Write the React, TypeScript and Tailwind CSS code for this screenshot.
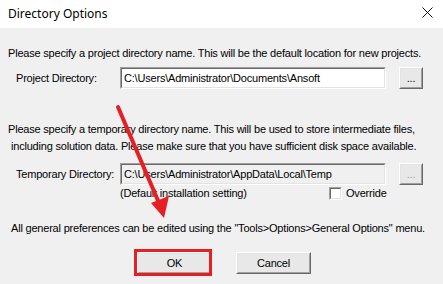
function Sunken({ children, className = "", disabled = false }: { children?: React.ReactNode; className?: string; disabled?: boolean }) {
  return (
    <div
      className={`border border-t-[#a0a0a0] border-l-[#a0a0a0] border-b-white border-r-white ${className}`}
    >
      <div
        className={`h-full border border-t-[#696969] border-l-[#696969] border-b-[#e3e3e3] border-r-[#e3e3e3] flex items-center px-[2px] ${
          disabled ? "bg-[#f0f0f0]" : "bg-white"
        }`}
      >
        {children}
      </div>
    </div>
  );
}

function WinButton({ children, className = "", disabled = false }: { children?: React.ReactNode; className?: string; disabled?: boolean }) {
  return (
    <div
      className={`border border-t-white border-l-white border-b-[#696969] border-r-[#696969] ${className}`}
    >
      <div
        className={`h-full border border-t-[#e3e3e3] border-l-[#e3e3e3] border-b-[#a0a0a0] border-r-[#a0a0a0] bg-[#e8e8e8] flex items-center justify-center ${
          disabled ? "text-[#a0a0a0]" : "text-black"
        }`}
      >
        {children}
      </div>
    </div>
  );
}

export default function App() {
  return (
    <div className="relative w-[443px] h-[284px] overflow-hidden bg-[#f0f0f0] font-['Liberation_Sans',Arial,sans-serif] text-[11px] tracking-[-0.2px] leading-[14px] text-black">
      {/* title bar */}
      <div className="h-[28px] bg-white flex items-center justify-between pl-[8px] pr-[10px]">
        <span className="font-['Noto_Sans',sans-serif] text-[12px] tracking-normal">Directory Options</span>
        <svg width="11" height="11" viewBox="0 0 11 11" className="mt-[-3px]">
          <path d="M0.5 0.5L10.5 10.5M10.5 0.5L0.5 10.5" stroke="#111" strokeWidth="1" />
        </svg>
      </div>

      <div className="pl-[8px] pt-[18px]">
        <p>Please specify a project directory name. This will be the default location for new projects.</p>

        <div className="flex items-center mt-[7px] h-[22px]">
          <span className="pl-[8px] w-[112px]">Project Directory:</span>
          <Sunken className="w-[266px] h-[22px]">C:\Users\Administrator\Documents\Ansoft</Sunken>
          <WinButton className="ml-[13px] w-[24px] h-[22px]">...</WinButton>
        </div>

        <p className="mt-[33px]">
          Please specify a temporary directory name. This will be used to store intermediate files,
        </p>
        <p className="mt-[3px] pl-[3px]">
          including solution data. Please make sure that you have sufficient disk space available.
        </p>

        <div className="flex items-center mt-[10px] h-[22px]">
          <span className="pl-[8px] w-[112px]">Temporary Directory:</span>
          <Sunken disabled className="w-[266px] h-[22px]">C:\Users\Administrator\AppData\Local\Temp</Sunken>
          <WinButton disabled className="ml-[13px] w-[24px] h-[22px]">...</WinButton>
        </div>

        <div className="flex items-center h-[14px] mt-[1px]">
          <span className="pl-[112px] w-[321px]">(Default installation setting)</span>
          <Sunken className="w-[13px] h-[13px]" />
          <span className="ml-[4px]">Override</span>
        </div>

        <p className="mt-[21px] pl-[3px]">
          All general preferences can be edited using the "Tools&gt;Options&gt;General Options" menu.
        </p>

        <div className="flex mt-[17px] pl-[129px] gap-[24px]">
          <div className="relative">
            <WinButton className="w-[75px] h-[22px]">OK</WinButton>
            <div className="absolute left-[-3px] top-[-3px] w-[78px] h-[27px] border-[3px] border-[#e81e25]" />
          </div>
          <WinButton className="w-[75px] h-[22px]">Cancel</WinButton>
        </div>
      </div>

      {/* red annotation arrow */}
      <svg className="absolute inset-0 pointer-events-none" width="443" height="284">
        <line x1="118" y1="107" x2="159" y2="203" stroke="#e81e25" strokeWidth="4" strokeLinecap="round" />
        <polygon points="151,203 169,196 164,218" fill="#e81e25" />
      </svg>
    </div>
  );
}
